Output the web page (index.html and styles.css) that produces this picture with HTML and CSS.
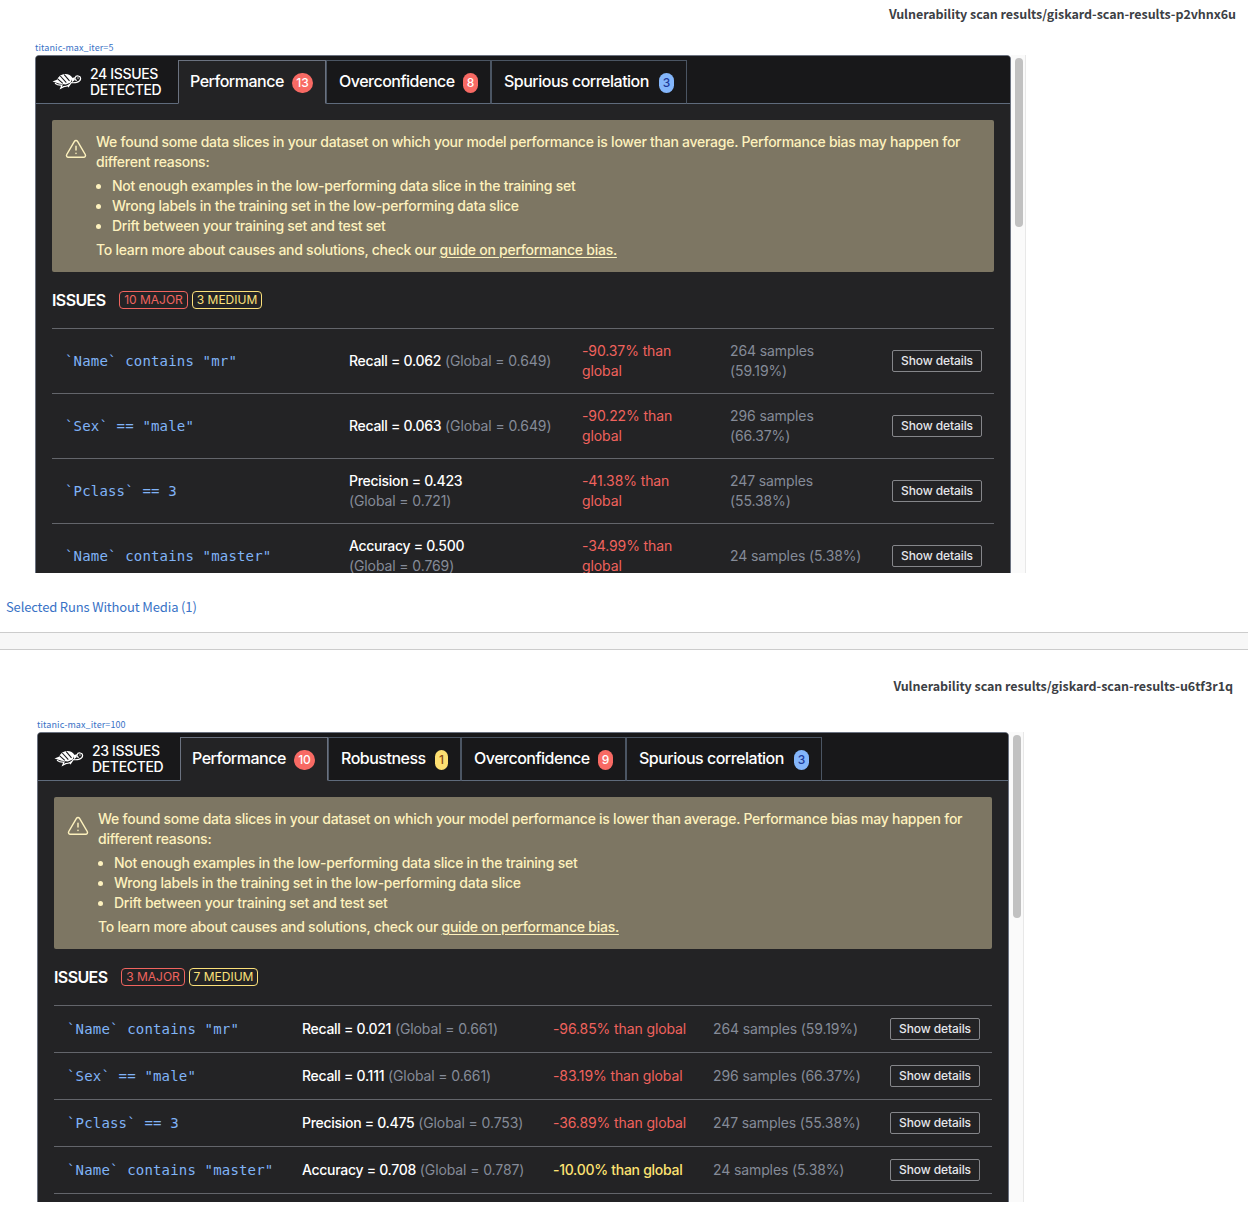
FILE: index.html
```html
<!DOCTYPE html>
<html lang="en">
<head>
<meta charset="utf-8">
<title>Vulnerability scan results</title>
<link rel="stylesheet" href="styles.css">
</head>
<body>
<svg class="sprite" aria-hidden="true">
  <symbol id="turtle" viewBox="0 0 30 18">
    <path d="M.5 9.400 4.800 7.800C6.500 4.300 9.500 2 13.300 2c3.300 0 5.700 1.600 7.200 4l-1.700 4.400-5 2.200-6.300-.8L.5 9.400z" fill="#fff"/>
    <path d="m5.400 6.600 5.400 4.700M8.300 4l6 6.600M12.200 2.600l5.300 6.200" stroke="#18181b" stroke-width="1.100" fill="none"/>
    <path d="M19 10.600c3 .4 9.300.2 9.600-3.800.2-3.300-4.700-3.900-5.500-1-.4 1.500.3 2.600 1.700 2.600" fill="none" stroke="#fff" stroke-width="1.200"/>
    <path d="m20 6 3-.8-.4 3-2.600 2z" fill="#fff"/>
    <circle cx="26" cy="6" r=".7" fill="#fff"/>
    <path d="M3 11.200c2 1.600 4.500 2.300 7 1.900l-1.300 3.200 3-1.600c3.500-.4 5.800-1.500 7.300-3.700l-3 4.200" fill="none" stroke="#fff" stroke-width="1.200"/>
  </symbol>
  <symbol id="warning" viewBox="0 0 24 24">
    <path d="M10.300 3.600 1.900 18a2 2 0 0 0 1.700 3h16.800a2 2 0 0 0 1.700-3L13.700 3.600a2 2 0 0 0-3.400 0zM12 9v4M12 16.500v.5" fill="none" stroke="currentColor" stroke-width="1.600" stroke-linecap="round" stroke-linejoin="round"/>
  </symbol>
</svg>

<section class="panel first">
  <h2 class="title">Vulnerability scan results/giskard-scan-results-p2vhnx6u</h2>
  <a class="run">titanic-max_iter=5</a>
  <div class="viewport">
    <div class="report">
      <header class="bar">
        <div class="brand"><svg class="turtle"><use href="#turtle"/></svg><span>24 ISSUES<br>DETECTED</span></div>
        <nav class="tabs">
          <div class="tab active w148"><span>Performance</span><b class="pill red wide">13</b></div>
          <div class="tab w165"><span>Overconfidence</span><b class="pill red">8</b></div>
          <div class="tab w196"><span>Spurious correlation</span><b class="pill blue">3</b></div>
        </nav>
      </header>
      <div class="alert">
        <svg class="warning"><use href="#warning"/></svg>
        <div>
          <p>We found some data slices in your dataset on which your model performance is lower than average. Performance bias may happen for<br>different reasons:</p>
          <ul><li>Not enough examples in the low-performing data slice in the training set</li><li>Wrong labels in the training set in the low-performing data slice</li><li>Drift between your training set and test set</li></ul>
          <p>To learn more about causes and solutions, check our <a class="guide">guide on performance bias.</a></p>
        </div>
      </div>
      <div class="issues"><h3>ISSUES</h3><span class="tag major w69">10 MAJOR</span><span class="tag medium w70">3 MEDIUM</span></div>
      <div class="rows">
        <div class="row"><code>`Name` contains "mr"</code><div><b>Recall = 0.062</b> <i>(Global = 0.649)</i></div><div class="drop">-90.37% than<br>global</div><div class="samples">264 samples<br>(59.19%)</div><button>Show details</button></div>
        <div class="row"><code>`Sex` == "male"</code><div><b>Recall = 0.063</b> <i>(Global = 0.649)</i></div><div class="drop">-90.22% than<br>global</div><div class="samples">296 samples<br>(66.37%)</div><button>Show details</button></div>
        <div class="row"><code>`Pclass` == 3</code><div><b>Precision = 0.423</b><br><i>(Global = 0.721)</i></div><div class="drop">-41.38% than<br>global</div><div class="samples">247 samples<br>(55.38%)</div><button>Show details</button></div>
        <div class="row"><code>`Name` contains "master"</code><div><b>Accuracy = 0.500</b><br><i>(Global = 0.769)</i></div><div class="drop">-34.99% than<br>global</div><div class="samples">24 samples (5.38%)</div><button>Show details</button></div>
      </div>
    </div>
    <div class="track"><div class="thumb"></div></div>
  </div>
  <a class="without">Selected Runs Without Media (1)</a>
</section>

<div class="divider"></div>

<section class="panel second">
  <h2 class="title">Vulnerability scan results/giskard-scan-results-u6tf3r1q</h2>
  <a class="run">titanic-max_iter=100</a>
  <div class="viewport">
    <div class="report">
      <header class="bar">
        <div class="brand"><svg class="turtle"><use href="#turtle"/></svg><span>23 ISSUES<br>DETECTED</span></div>
        <nav class="tabs">
          <div class="tab active w148"><span>Performance</span><b class="pill red wide">10</b></div>
          <div class="tab w133"><span>Robustness</span><b class="pill yellow">1</b></div>
          <div class="tab w165"><span>Overconfidence</span><b class="pill red">9</b></div>
          <div class="tab w196"><span>Spurious correlation</span><b class="pill blue">3</b></div>
        </nav>
      </header>
      <div class="alert">
        <svg class="warning"><use href="#warning"/></svg>
        <div>
          <p>We found some data slices in your dataset on which your model performance is lower than average. Performance bias may happen for<br>different reasons:</p>
          <ul><li>Not enough examples in the low-performing data slice in the training set</li><li>Wrong labels in the training set in the low-performing data slice</li><li>Drift between your training set and test set</li></ul>
          <p>To learn more about causes and solutions, check our <a class="guide">guide on performance bias.</a></p>
        </div>
      </div>
      <div class="issues"><h3>ISSUES</h3><span class="tag major w64">3 MAJOR</span><span class="tag medium w69">7 MEDIUM</span></div>
      <div class="rows">
        <div class="row"><code>`Name` contains "mr"</code><div><b>Recall = 0.021</b> <i>(Global = 0.661)</i></div><div class="drop">-96.85% than global</div><div class="samples">264 samples (59.19%)</div><button>Show details</button></div>
        <div class="row"><code>`Sex` == "male"</code><div><b>Recall = 0.111</b> <i>(Global = 0.661)</i></div><div class="drop">-83.19% than global</div><div class="samples">296 samples (66.37%)</div><button>Show details</button></div>
        <div class="row"><code>`Pclass` == 3</code><div><b>Precision = 0.475</b> <i>(Global = 0.753)</i></div><div class="drop">-36.89% than global</div><div class="samples">247 samples (55.38%)</div><button>Show details</button></div>
        <div class="row"><code>`Name` contains "master"</code><div><b>Accuracy = 0.708</b> <i>(Global = 0.787)</i></div><div class="drop mild">-10.00% than global</div><div class="samples">24 samples (5.38%)</div><button>Show details</button></div>
        <div class="row"></div>
      </div>
    </div>
    <div class="track"><div class="thumb"></div></div>
  </div>
</section>
</body>
</html>
```

FILE: styles.css
```css
* { box-sizing: border-box; }
body { margin: 0; background: #fff; font-family: Inter, "Liberation Sans", sans-serif; height: 1209px; overflow: hidden; }
.sprite { display: none; }
p, ul, h2, h3 { margin: 0; padding: 0; }

.panel { display: flex; flex-direction: column; align-items: flex-start; }
.first { height: 632px; }
.second { height: 559px; }
.title, .run, .without { font-family: "Noto Sans CJK SC", "Open Sans", sans-serif; white-space: nowrap; }
.title { align-self: flex-end; font-size: 12.5px; line-height: 20px; font-weight: 600; color: #3c4045; letter-spacing: -0.05px; }
.first .title { margin: 4px 12px 0 0; }
.second .title { margin: 26px 15px 0 0; }
.run { color: #3872c6; font-size: 9px; line-height: 12px; letter-spacing: 0.1px; }
.first .run { margin: 18px 0 1px 35px; }
.second .run { margin: 23px 0 1px 37px; }
.without { color: #3872c6; font-size: 13px; line-height: 20px; margin: 24px 0 0 6px; letter-spacing: -0.15px; }
.divider { height: 18px; background: #f7f7f7; border-top: 1px solid #ccc; border-bottom: 1px solid #ccc; }

.viewport { display: flex; overflow: hidden; }
.first .viewport { width: 991px; height: 518px; margin-left: 35px; }
.second .viewport { width: 987px; height: 470px; margin-left: 37px; }
.report { flex: 1; height: 700px; background: #232325; border: 1px solid #6b7280; border-radius: 4px 4px 0 0; overflow: hidden; }
.track { width: 15px; background: #fafafa; border-right: 1px solid #e8e8e8; padding: 3px 3px 0 4px; }
.thumb { width: 8px; height: 169px; border-radius: 4px; background: #c1c1c1; }
.second .thumb { height: 183px; }

.bar { display: flex; height: 48px; background: #18181a; border-bottom: 1px solid #5f6b7c; }
.brand { width: 142px; display: flex; align-items: center; gap: 8px; padding: 5px 0 0 16px; color: #fff; font-size: 14px; line-height: 16px; font-weight: 500; letter-spacing: -0.35px; white-space: nowrap; }
.turtle { width: 30px; height: 18px; flex: none; margin-top: -3px; }
.tabs { display: flex; height: 44px; margin-top: 4px; }
.tab { display: flex; align-items: center; justify-content: space-between; padding: 0 12px 1px 12px; border: 1px solid #4b5563; border-bottom-color: #5f6b7c; color: #fff; font-size: 16px; font-weight: 500; white-space: nowrap; letter-spacing: -0.5px; }
.tab span { padding-bottom: 2px; }
.tab.active { background: #232325; border-color: #6b7280; border-bottom-color: #232325; padding-left: 11px; }
.w148 { width: 148px; }
.w165 { width: 165px; }
.w196 { width: 196px; }
.w133 { width: 133px; }
.pill { min-width: 15px; height: 20px; border-radius: 10px; font-size: 12px; line-height: 20px; font-weight: 500; text-align: center; letter-spacing: 0; margin-top: 3px; }
.wide { width: 21px; }
.red { background: #f86a64; color: #fff; }
.blue { background: #84b6fb; color: #1e3a9a; }
.yellow { background: #fddf72; color: #8a4b14; min-width: 13px; }

.alert { display: flex; margin: 16px 16px 0; height: 152px; background: #7d7663; border-radius: 2px; color: #fdf1bd; font-size: 14px; font-weight: 500; line-height: 20px; letter-spacing: -0.26px; padding: 12px 0 0 13px; white-space: nowrap; }
.warning { width: 22px; height: 22px; margin: 6px 9px 0 0; flex: none; }
.alert ul { list-style: none; margin: 4px 0; padding-left: 16px; }
.alert li { display: flex; align-items: center; }
.alert li::before { content: ""; width: 5px; height: 5px; border-radius: 50%; background: currentColor; margin: 0 11px 0 -16px; }
.guide { text-decoration: underline; text-underline-offset: 2px; }

.issues { display: flex; align-items: center; height: 56px; margin: 0 16px; color: #fff; }
.issues h3 { width: 67px; font-size: 16px; font-weight: 600; letter-spacing: -0.6px; }
.tag { height: 18px; border: 1px solid; border-radius: 4px; font-size: 12px; line-height: 16px; text-align: center; margin-right: 4px; white-space: nowrap; }
.w69 { width: 69px; }
.w70 { width: 70px; }
.w64 { width: 64px; }
.major { color: #f0645f; }
.medium { color: #fbe07a; }

.rows { margin: 0 16px; }
.row { display: grid; align-items: center; border-top: 1px solid #63656b; padding-left: 13px; font-size: 14px; line-height: 20px; white-space: nowrap; color: #858b98; letter-spacing: -0.11px; }
.first .row { height: 65px; grid-template-columns: 284px 233px 148px 162px 90px; }
.second .row { height: 47px; grid-template-columns: 235px 251px 160px 177px 90px; }
.row code { font-family: "DejaVu Sans Mono", monospace; font-size: 14px; letter-spacing: 0.17px; color: #80b3f7; }
.row b { color: #fff; font-weight: 500; letter-spacing: -0.29px; }
.row i { font-style: normal; }
.row .drop { color: #f0625d; }
.row .mild { color: #fde272; font-weight: 500; letter-spacing: -0.28px; }
.row button { width: 90px; height: 22px; padding: 0; border: 1px solid #85868a; border-radius: 2px; background: transparent; color: #e5e7eb; font: 500 12px/20px Inter, sans-serif; letter-spacing: -0.1px; }
```
